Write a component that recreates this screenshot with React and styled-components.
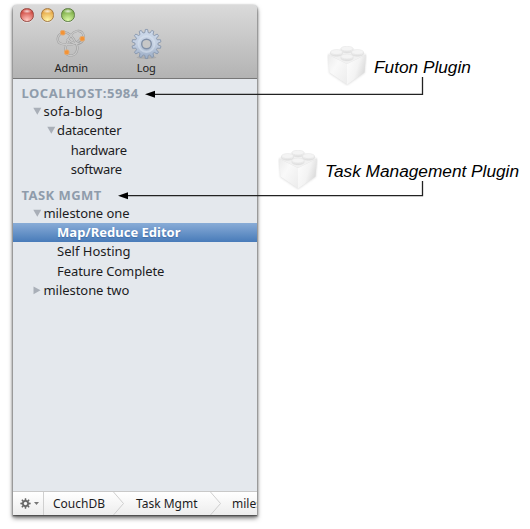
import React from 'react';
import styled, { createGlobalStyle, css } from 'styled-components';

const GlobalStyle = createGlobalStyle`
  * { box-sizing: border-box; }
  body { margin: 0; background: #fff; overflow: hidden; }
`;

const Canvas = styled.main`
  position: relative;
  display: flex;
  width: 530px;
  height: 529px;
  padding: 5px 0 0 13px;
  background: #fff;
  font-family: "Noto Sans", "Open Sans", sans-serif;
  font-size: 13px;
  color: #1c1c1e;
`;

const Window = styled.section`
  display: flex;
  flex-direction: column;
  width: 244px;
  height: 510px;
  border-radius: 4px 4px 0 0;
  background: #e4e8ed;
  box-shadow: 0 1px 2px 1px rgba(90, 90, 90, 0.45), 0 1px 1px rgba(0, 0, 0, 0.5),
    0 3px 5px rgba(0, 0, 0, 0.55);
`;

const Header = styled.header`
  height: 74px;
  flex: none;
  padding: 4px 0 0 7.3px;
  border-radius: 4px 4px 0 0;
  border-bottom: 1px solid #777;
  background: linear-gradient(#dadada, #b3b3b3);
`;

const Lights = styled.div`
  display: flex;
  gap: 7px;
  height: 14px;
  margin-top: -1px;
`;

const Light = styled.i`
  width: 13.5px;
  height: 13.5px;
  border-radius: 50%;
  border: 1px solid ${(p) => p.$edge};
  background: radial-gradient(ellipse 5px 2.2px at 50% 18%, #fffc, #fff0),
    radial-gradient(circle at 50% 95%, ${(p) => p.$glow} 5%, ${(p) => p.$color} 75%);
  box-shadow: 0 1px 0 #eee8;
`;

const Tools = styled.div`
  display: flex;
  padding-left: 13.5px;
`;

const Tool = styled.button`
  display: flex;
  flex-direction: column;
  align-items: center;
  width: 75px;
  padding: 7px 0 0;
  margin: 0;
  border: 0;
  background: none;
  font: inherit;
  font-size: 11px;
  color: #222;
  svg { display: block; overflow: visible; }
`;

const Label = styled.span`
  display: block;
  margin-top: 2px;
  line-height: 16px;
  white-space: nowrap;
`;

const Sidebar = styled.nav`
  flex: 1;
  padding-top: 5px;
`;

const Group = styled.div`
  margin-bottom: 6.6px;
`;

const GroupTitle = styled.h2`
  margin: 0;
  padding-left: 8.5px;
  height: 17.6px;
  line-height: 19px;
  font-size: 13px;
  font-weight: 700;
  letter-spacing: ${(p) => p.$track}px;
  color: #8f9cab;
  white-space: nowrap;
`;

const Row = styled.div`
  display: flex;
  align-items: center;
  height: 19.4px;
  padding-left: ${(p) => 17 + p.$depth * 13.6}px;
  letter-spacing: ${(p) => p.$track}px;
  line-height: 19px;
  white-space: nowrap;
  ${(p) =>
    p.$selected &&
    css`
      color: #fff;
      font-weight: 700;
      background: linear-gradient(#89acd7, #487bb9);
      text-shadow: 0 1px 1px #2b579088;
    `}
`;

const Twisty = styled.span`
  display: flex;
  align-items: center;
  width: 13.5px;
  padding-left: 3px;
  flex: none;
  svg { display: block; }
`;

const PathBar = styled.footer`
  display: flex;
  height: 24px;
  flex: none;
  overflow: hidden;
  border-top: 1px solid #c9c9c9;
  background: linear-gradient(#fff, #ededed);
  font-size: 12px;
`;

const Action = styled.button`
  display: flex;
  align-items: center;
  gap: 3px;
  width: 31px;
  flex: none;
  padding: 0 0 0 7px;
  border: 0;
  border-right: 1px solid #d0d0d0;
  background: none;
`;

const Crumb = styled.span`
  display: flex;
  flex: none;
  justify-content: space-between;
  width: ${(p) => p.$width}px;
  padding-left: ${(p) => p.$pad}px;
  line-height: 23px;
  white-space: nowrap;
  svg { flex: none; }
`;

const Callout = styled.figure`
  position: absolute;
  left: ${(p) => p.$x}px;
  top: ${(p) => p.$y}px;
  display: flex;
  align-items: center;
  gap: 7px;
  margin: 0;
  font: italic 17.25px/22px "Liberation Sans", Arial, sans-serif;
  color: #000;
  white-space: nowrap;
  svg { display: block; flex: none; }
`;

const CalloutText = styled.figcaption`
  padding-top: 1px;
`;

const Arrows = styled.svg`
  position: absolute;
  inset: 0;
  pointer-events: none;
`;

const LOOPS = [
  'M6 4C0 7 .5 14 6 15C13 16.500 21 16 25 9',
  'M6 4C13 1 18 10 20.500 15C23 21 20 26.500 15 26.500C9 26.500 8.500 21 10 17C12 10 15 3 21 2',
  'M21 2C27 1 29.500 8 26.500 12C23 17 15 14 11 10',
];

function CouchIcon() {
  return (
    <svg width="30" height="29" viewBox="0 0 30 29" fill="none">
      <g stroke="#9b9b9b" strokeWidth="2.200">
        {LOOPS.map((d) => <path key={d} d={d} />)}
      </g>
      <g stroke="#c8c8c8" strokeWidth="1.300">
        {LOOPS.map((d) => <path key={d} d={d} />)}
      </g>
      <g fill="#f49335" stroke="#e3aa72" strokeWidth="1">
        <rect x="4.500" y="1.500" width="4.500" height="4.500" rx="1.500" />
        <rect x="24" y="7.500" width="4.500" height="4.500" rx="1.500" />
        <rect x="8.500" y="21" width="4.500" height="4.500" rx="1.500" />
      </g>
    </svg>
  );
}

function gearPath(teeth, outer, inner) {
  const pts = [];
  for (let i = 0; i < teeth; i += 1) {
    [[-0.33, inner], [-0.17, outer], [0.17, outer], [0.33, inner]].forEach(([o, r]) => {
      const a = ((i + o) / teeth) * Math.PI * 2 - Math.PI / 2;
      pts.push(`${(r * Math.cos(a)).toFixed(2)} ${(r * Math.sin(a)).toFixed(2)}`);
    });
  }
  return `M${pts.join('L')}Z`;
}

function GearIcon() {
  return (
    <svg width="31" height="29" viewBox="-15.5 -15 31 29">
      <defs>
        <linearGradient id="steel" x2="0" y2="1">
          <stop stopColor="#ccd9eb" />
          <stop offset=".5" stopColor="#c3cfe1" />
          <stop offset="1" stopColor="#9aacc5" />
        </linearGradient>
      </defs>
      <ellipse cy="13.500" rx="10" ry="1.500" fill="#777" opacity=".25" />
      <path d={gearPath(14, 14.6, 11.5)} fill="url(#steel)" stroke="#8090a8" strokeWidth=".8" />
      <circle r="8" fill="none" stroke="#dce5f2" strokeWidth="2" opacity=".5" />
      <circle r="4.800" fill="#c7c7c7" stroke="#8190a7" strokeWidth="1.400" />
    </svg>
  );
}

function Brick() {
  return (
    <svg width="40" height="40" viewBox="0 0 40 40">
      <defs>
        <linearGradient id="left" x2="1" y2="1">
          <stop stopColor="#ebebeb" />
          <stop offset=".4" stopColor="#f9f9f9" />
          <stop offset="1" stopColor="#ececec" />
        </linearGradient>
        <linearGradient id="right" x2="1" y2=".5">
          <stop stopColor="#fdfdfd" />
          <stop offset=".6" stopColor="#f3f3f3" />
          <stop offset="1" stopColor="#d9d9d9" />
        </linearGradient>
        <linearGradient id="stud" x2="0" y2="1">
          <stop stopColor="#f5f5f5" />
          <stop offset="1" stopColor="#dedede" />
        </linearGradient>
        <filter id="soft" x="-20%" y="-20%" width="140%" height="140%">
          <feGaussianBlur stdDeviation="1" />
        </filter>
      </defs>
      <path d="M1 9L20 2L39 9L37.500 27L20 39L2.500 27Z" fill="#aaa" opacity=".45" filter="url(#soft)" />
      <path d="M1 8.500L20 1.500L39 8.500L20 18Z" fill="#f1f1f1" />
      <path d="M1 8.500L20 18V38.500L2.500 26.500Z" fill="url(#left)" />
      <path d="M39 8.500L20 18V38.500L37.500 26.500Z" fill="url(#right)" />
      {[[20, 2.6], [9.5, 6], [30.5, 6], [20, 10.5]].map(([x, y]) => (
        <g key={`${x}-${y}`}>
          <path d={`M${x - 6} ${y}v1.800a6 2.400 0 0 0 12 0v-1.800`} fill="url(#stud)" stroke="#d8d8d8" strokeWidth=".5" />
          <ellipse cx={x} cy={y} rx="6" ry="2.400" fill="#f4f4f4" stroke="#e2e2e2" strokeWidth=".5" />
        </g>
      ))}
    </svg>
  );
}

function Triangle({ open }) {
  return (
    <svg width="9" height="9" viewBox="0 0 9 9">
      <path d={open ? 'M.3 .8H8.300L4.300 7.800Z' : 'M.5 .5L7.500 4.300L.5 8.200Z'} fill="#a9afb8" />
    </svg>
  );
}

function Item({ text, depth, track = 0, open, selected }) {
  return (
    <Row $depth={depth} $track={track} $selected={selected}>
      <Twisty>{open !== undefined && <Triangle open={open} />}</Twisty>
      {text}
    </Row>
  );
}

function Chevron() {
  return (
    <svg width="12" height="23" viewBox="0 0 12 23" fill="none">
      <path d="M.5 0L10.500 11.500L.5 23" stroke="#cfcfcf" />
    </svg>
  );
}

export default function App() {
  return (
    <Canvas>
      <GlobalStyle />
      <Window>
        <Header>
          <Lights>
            <Light $color="#cf4a42" $glow="#ffc4bd" $edge="#9a4942" />
            <Light $color="#e5a544" $glow="#fff3a5" $edge="#a77b43" />
            <Light $color="#7dad48" $glow="#d8f7a3" $edge="#5d7d43" />
          </Lights>
          <Tools>
            <Tool><CouchIcon /><Label>Admin</Label></Tool>
            <Tool><GearIcon /><Label>Log</Label></Tool>
          </Tools>
        </Header>
        <Sidebar>
          <Group>
            <GroupTitle $track={0.5}>LOCALHOST:5984</GroupTitle>
            <Item text="sofa-blog" depth={0} track={0.25} open />
            <Item text="datacenter" depth={1} track={-0.2} open />
            <Item text="hardware" depth={2} track={-0.3} />
            <Item text="software" depth={2} track={-0.25} />
          </Group>
          <Group>
            <GroupTitle $track={0.45}>TASK MGMT</GroupTitle>
            <Item text="milestone one" depth={0} track={-0.08} open />
            <Item text="Map/Reduce Editor" depth={1} selected />
            <Item text="Self Hosting" depth={1} />
            <Item text="Feature Complete" depth={1} track={-0.1} />
            <Item text="milestone two" depth={0} track={-0.05} open={false} />
          </Group>
        </Sidebar>
        <PathBar>
          <Action aria-label="Actions">
            <svg width="11" height="11" viewBox="-5.5 -5.5 11 11">
              <path d={gearPath(8, 5.2, 3.5)} fill="#666" />
              <circle r="1.700" fill="#f5f5f5" />
            </svg>
            <svg width="5" height="3" viewBox="0 0 5 3"><path d="M0 0H5L2.500 3Z" fill="#777" /></svg>
          </Action>
          <Crumb $width={81} $pad={9}>CouchDB<Chevron /></Crumb>
          <Crumb $width={97} $pad={11}>Task Mgmt<Chevron /></Crumb>
          <Crumb $width={60} $pad={10}>miles</Crumb>
        </PathBar>
      </Window>
      <Callout $x={327} $y={46}><Brick /><CalloutText>Futon Plugin</CalloutText></Callout>
      <Callout $x={278} $y={150}><Brick /><CalloutText>Task Management Plugin</CalloutText></Callout>
      <Arrows width="530" height="529" viewBox="0 0 530 529">
        <g fill="none" stroke="#222" strokeWidth="1.300">
          <path d="M422.500 77V94.300H153" />
          <path d="M422.500 181V195.700H126" />
        </g>
        <path d="M145 94.300L155 90.800V97.800ZM118 195.700L128 192.200V199.200Z" fill="#000" />
      </Arrows>
    </Canvas>
  );
}
